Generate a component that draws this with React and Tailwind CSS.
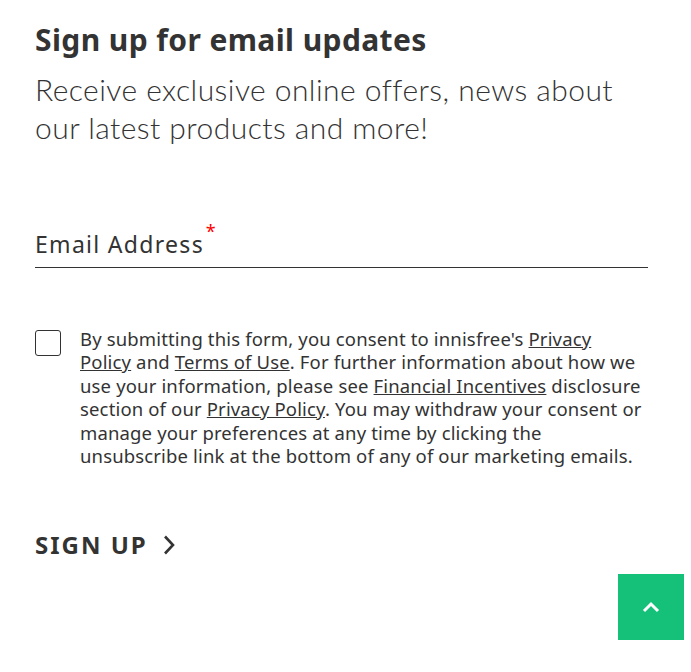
import React from 'react';

const sans = { fontFamily: '"Noto Sans", Lato, sans-serif' };
const light = { fontFamily: 'Lato, "Noto Sans", sans-serif' };

const App = () => {
  return (
    <div className="relative min-h-[672px] w-[691px] bg-white text-[#333333]" style={sans}>
      <div className="w-[648px] pl-[35px] pt-[20px]">
        <h2 className="text-[30px] font-bold leading-[40px] tracking-[0.4px]">Sign up for email updates</h2>
        <p className="mt-[10px] text-[30px] font-light leading-[38px] tracking-[0.45px]" style={light}>
          Receive exclusive online offers, news about our latest products and more!
        </p>

        <div className="mt-[82px] border-b border-[#333333] pb-[7px]">
          <label className="relative text-[23px] leading-[32px] tracking-[1.3px]">
            Email Address
            <span className="absolute -right-[13px] -top-[7px] text-[18px] leading-[20px] text-[#ff0000]">*</span>
          </label>
        </div>

        <div className="mt-[59px] flex items-start gap-[19px] pr-[3px]">
          <input type="checkbox" className="mt-[3px] h-[26px] w-[26px] shrink-0 appearance-none rounded-[3px] border border-[#333333] bg-white" />
          <p className="text-[18.5px] leading-[23.4px] tracking-[0.15px]">
            By submitting this form, you consent to innisfree's <a className="underline">Privacy Policy</a> and{' '}
            <a className="underline">Terms of Use</a>. For further information about how we use your information,
            please see <a className="underline">Financial Incentives</a> disclosure section of our{' '}
            <a className="underline">Privacy Policy</a>. You may withdraw your consent or manage your preferences at
            any time by clicking the unsubscribe link at the bottom of any of our marketing emails.
          </p>
        </div>

        <button className="mt-[60px] flex items-center gap-[15px] text-[24px] font-bold uppercase tracking-[2px]">
          Sign up
          <svg width="12" height="20" viewBox="0 0 12 20" fill="none" stroke="#333333" strokeWidth="2.6">
            <path d="M2 1.5l8 8.5-8 8.5" />
          </svg>
        </button>
      </div>

      <button className="absolute left-[618px] top-[574px] flex h-[66px] w-[66px] items-center justify-center bg-[#15c079]">
        <svg width="18" height="12" viewBox="0 0 18 12" fill="none" stroke="#ffffff" strokeWidth="3">
          <path d="M2 10l7-7 7 7" />
        </svg>
      </button>
    </div>
  );
};

export default App;
